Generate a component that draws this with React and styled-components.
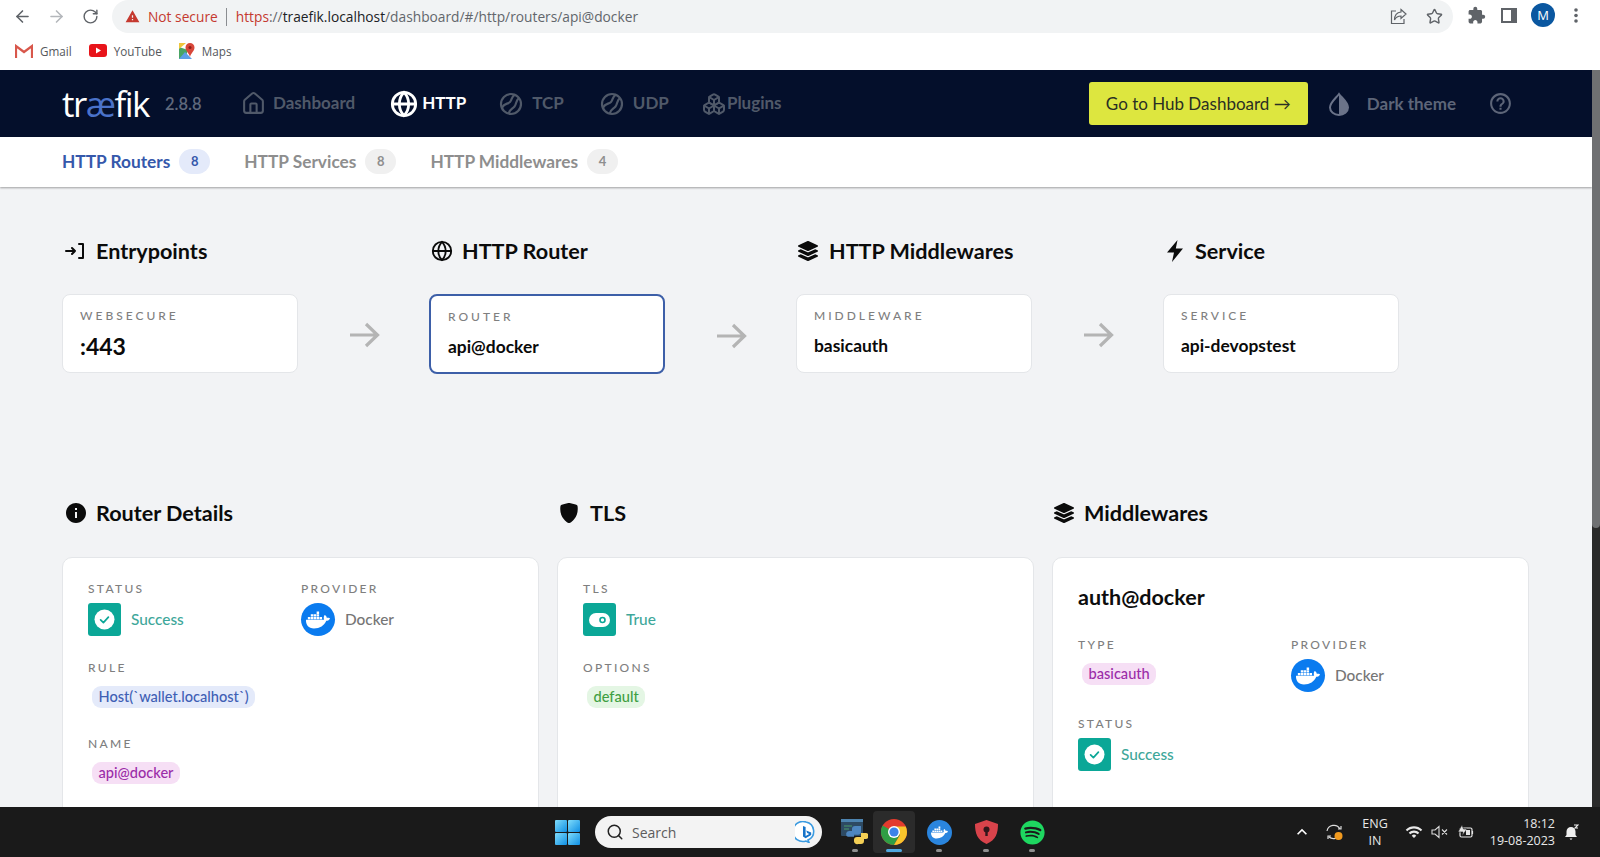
import React from 'react';
import styled, { createGlobalStyle } from 'styled-components';
import { ArrowLeft, ArrowRight, RotateCw, Star, Search, House, Globe, Boxes } from 'lucide-react';
import { FaDocker, FaSpotify, FaLayerGroup } from 'react-icons/fa';
import { MdInfo, MdHelpOutline, MdWarning, MdKeyboardArrowUp, MdWifi, MdExtension } from 'react-icons/md';
import { BsShieldFill } from 'react-icons/bs';

const Global = createGlobalStyle`
  html, body { margin: 0; padding: 0; height: 100%; overflow: hidden; background: #fff; }
  * { box-sizing: border-box; }
  body { font-family: Lato, "Noto Sans", sans-serif; }
`;

const Screen = styled.div`
  width: 1600px; height: 857px; display: flex; flex-direction: column; overflow: hidden;
`;

/* browser chrome */
const Toolbar = styled.div`
  height: 34px; flex: none; display: flex; align-items: flex-start; background: #fff; color: #5f6368;
`;
const ToolBtn = styled.span`
  width: 34px; height: 32px; flex: none; display: flex; align-items: center; justify-content: center;
  color: ${p => p.$muted ? '#b4b7bb' : '#5f6368'};
`;
const NavBtns = styled.div`
  width: 112px; flex: none; display: flex; padding-left: 5px;
`;
const Omnibox = styled.div`
  width: 1341px; height: 33px; flex: none; background: #f1f3f4; border-radius: 17px;
  display: flex; align-items: center; padding-left: 13px; font: 13.75px "Open Sans", sans-serif;
`;
const Insecure = styled.span`
  color: #c5392f; display: flex; align-items: center; gap: 8px;
  padding-right: 8px; border-right: 1px solid #8a8d91; line-height: 18px;
`;
const Url = styled.span`
  margin-left: 9px; color: #62666b; white-space: pre;
`;
const UrlScheme = styled.span` color: #c5392f; `;
const UrlHost = styled.span` color: #202124; `;
const OmniActions = styled.div`
  margin-left: auto; display: flex; align-items: center; gap: 19px; padding-right: 10px; color: #5f6368;
`;
const ToolRight = styled.div`
  flex: 1; display: flex; align-items: center; height: 30px; padding-left: 14px; color: #5f6368; gap: 15px;
`;
const Avatar = styled.span`
  width: 24px; height: 24px; border-radius: 50%; background: #0a57a0; color: #fff; font: 13px "Open Sans", sans-serif;
  display: flex; align-items: center; justify-content: center; flex: none; margin-left: -1px; margin-right: 4px;
`;
const Bookmarks = styled.div`
  height: 36px; flex: none; background: #fff; display: flex; align-items: center; padding: 0 0 3px 15px; gap: 17px;
  font: 11.7px "Open Sans", sans-serif; color: #55585c;
`;
const Bookmark = styled.span` display: flex; align-items: center; gap: 7px; `;

/* page */
const Viewport = styled.div` flex: 1; min-height: 0; display: flex; `;
const Page = styled.div`
  flex: 1; min-width: 0; background: #f2f3f5; overflow: hidden; display: flex; flex-direction: column;
`;
const ScrollTrack = styled.div`
  width: 8px; flex: none; background: #2a2a2a;
`;
const ScrollThumb = styled.div`
  height: 458px; background: #6f7072; border-radius: 0 0 4px 4px;
`;
const TopNav = styled.header`
  height: 67px; flex: none; background: #040f2b; display: flex; align-items: center; padding: 0 79px 0 62px;
`;
const Logo = styled.div`
  font: 400 35px "Open Sans", sans-serif; color: #fff; letter-spacing: -1.5px; width: 103px; line-height: 40px;
`;
const LogoAe = styled.span` color: #4a72c9; `;
const Version = styled.span`
  font-size: 16.5px; font-weight: 600; color: #5f687b; width: 76px;
`;
const NavItem = styled.a`
  display: flex; align-items: center; gap: ${p => p.$gap || 9}px; margin-right: ${p => p.$mr || 35}px; font-size: 17px; font-weight: 700;
  color: ${p => p.$active ? '#fff' : '#505969'};
`;
const NavText = styled.span` margin-top: -2px; `;
const NavRight = styled.div` margin-left: auto; display: flex; align-items: center; `;
const HubButton = styled.button`
  width: 219px; height: 43px; border: 0; border-radius: 3px; background: #dde63f; color: #2a2f24;
  font: 400 17px Lato, sans-serif; padding: 0;
`;
const ThemeToggle = styled.span`
  display: flex; align-items: center; gap: 16px; margin-left: 19px; color: #5d6578; font-size: 17px; font-weight: 700;
`;
const Help = styled.span` display: flex; margin-left: 32px; color: #5d6578; `;

const SubNav = styled.nav`
  height: 50px; flex: none; background: #fff; display: flex; align-items: center; padding: 0 0 2px 62px; gap: 34px;
  box-shadow: 0 1px 2px rgba(0,0,0,.35); position: relative;
`;
const Tab = styled.a`
  display: flex; align-items: center; gap: 9px; font-size: 17.3px; font-weight: 700;
  color: ${p => p.$active ? '#3558ab' : '#8e8e8e'};
`;
const TabCount = styled.span`
  width: 31px; height: 25px; border-radius: 13px; display: flex; align-items: center; justify-content: center;
  font-size: 13px; font-weight: 700;
  background: ${p => p.$active ? '#e4eafa' : '#f0f0f0'}; color: ${p => p.$active ? '#3558ab' : '#8e8e8e'};
`;
const Content = styled.main` padding: 50px 0 0 62px; flex: 1; min-height: 0; display: flex; flex-direction: column; `;
const FlowRow = styled.section` display: flex; `;
const FlowColumn = styled.div` width: 367px; flex: none; `;
const SectionTitle = styled.h2`
  margin: 0 0 ${p => p.$mb || 29}px; height: 28px; display: flex; align-items: center; gap: ${p => p.$gap || 9}px;
  font-size: 21.6px; font-weight: 700; line-height: 28px; color: #0b0b0b; white-space: nowrap;
  padding-left: 2px;
`;
const FlowBody = styled.div` display: flex; align-items: center; `;
const FlowCard = styled.div`
  width: 236px; height: ${p => p.$active ? 80 : 79}px; flex: none; background: #fff; border-radius: 8px; padding: 13px 17px 0;
  border: ${p => p.$active ? '2px solid #3d5fa8' : '1px solid #e4e6e9'};
`;
const FlowArrow = styled.span`
  width: 131px; display: flex; justify-content: center; padding: 3px 0 0 3px; color: #b4b4b4;
`;
const Label = styled.div`
  font-size: 12px; line-height: 16px; letter-spacing: 2.3px; color: #7f7f7f; font-weight: 500; text-transform: uppercase;
`;
const FlowLabel = styled(Label)` letter-spacing: 3px; `;
const FlowValue = styled.div`
  margin-top: 10px; line-height: 24px; color: #0a0a0a; font-weight: 700; font-size: ${p => p.$big ? 23 : 17.4}px;
`;
const DetailGrid = styled.section`
  margin-top: 125px; width: 1467px; display: grid; grid-template-columns: repeat(3, 1fr); column-gap: 18px;
`;
const DetailCard = styled.div`
  height: 400px; background: #fff; border: 1px solid #e4e6e9; border-radius: 10px; padding: 23px 24px 0 25px;
`;
const DetailColumn = styled.div` min-width: 0; `;
const FieldGrid = styled.div`
  display: grid; grid-template-columns: repeat(2, 213px); row-gap: 24px; align-content: start;
`;
const Field = styled.div` grid-column: ${p => p.$wide ? '1 / -1' : 'auto'}; `;
const IconLine = styled.div`
  margin-top: 6px; display: flex; align-items: center; gap: 10px; font-size: 15.4px; font-weight: 500;
  color: ${p => p.$tone || '#767676'};
`;
const IconLineText = styled.span` margin-top: -2px; `;
const StateBox = styled.span`
  width: 33px; height: 33px; border-radius: 3px; background: #0ba797; display: flex; align-items: center; justify-content: center; flex: none;
`;
const ProviderDisc = styled.span`
  width: 34px; height: 33px; border-radius: 50%; background: #0a7bef; display: flex; align-items: center; justify-content: center; color: #fff; flex: none;
`;
const Chip = styled.span`
  display: inline-block; margin: 10px 0 4px 4px; height: 22px; line-height: 22px; padding: 0 6.5px; border-radius: 9px;
  font-size: 14.6px; font-weight: 500; background: ${p => p.$bg}; color: ${p => p.$fg};
`;
const CardName = styled.div`
  height: 32px; line-height: 32px; margin-bottom: 24px; font-size: 21.5px; font-weight: 700; color: #0d0d0d;
`;

/* taskbar */
const Taskbar = styled.footer`
  height: 50px; flex: none; background: #1a1a1a; display: flex; align-items: center;
  color: #e8e8e8; font: 12.5px "Open Sans", sans-serif;
`;
const TaskCenter = styled.div`
  margin-left: 555px; display: flex; align-items: center;
`;
const SearchPill = styled.div`
  width: 227px; height: 32px; border-radius: 16px; background: #f3f3f3; margin-left: 15px; display: flex; align-items: center;
  padding-left: 11px; gap: 8px; color: #5c5c5c; font-size: 14px; position: relative;
`;
const BingBadge = styled.span` position: absolute; right: 5px; top: 5px; display: flex; `;
const TaskApps = styled.div` display: flex; align-items: center; margin-left: 14px; `;
const TaskSlot = styled.span`
  width: ${p => p.$w || 46}px; height: 42px; display: flex; align-items: center; justify-content: center; position: relative;
  border-radius: 4px; background: ${p => p.$on ? '#2b2b2b' : 'transparent'};
  &::after {
    content: ''; position: absolute; bottom: 1px; left: 50%; height: 3px; border-radius: 2px; transform: translateX(-50%);
    width: ${p => p.$on ? 16 : 6}px; background: ${p => p.$on ? '#4fa8e0' : '#8f8f8f'};
  }
`;
const AppDisc = styled.span`
  width: 25px; height: 25px; border-radius: 50%; background: #2a85de; color: #fff; display: flex; align-items: center; justify-content: center;
`;
const Tray = styled.div`
  margin-left: auto; display: flex; align-items: center; padding-right: 21px;
`;
const TrayStack = styled.div`
  display: flex; flex-direction: column; align-items: ${p => p.$end ? 'flex-end' : 'center'}; line-height: 17px; margin: ${p => p.$m || 0};
`;
const TrayIcon = styled.span` display: flex; margin: ${p => p.$m || 0}; `;

const Enter = () => (
  <svg width="22" height="22" viewBox="0 0 22 22" fill="none" stroke="#0b0b0b" strokeWidth="2" strokeLinecap="round" strokeLinejoin="round">
    <path d="M2 11h9M8 8l3 3-3 3M15 4h4v14h-4" />
  </svg>
);
const Swirl = () => (
  <svg width="24" height="24" viewBox="0 0 24 24" fill="none" stroke="#505969" strokeWidth="2.2" strokeLinecap="round">
    <circle cx="12" cy="12" r="10" />
    <path d="M15.500 3c-3 1.500-2.500 5-4.500 7s-6 1.500-7.500 5" />
    <path d="M19.500 6.500c-2.500 2-2 5.500-4 8s-5 3-5.500 6.500" />
  </svg>
);
const Droplet = () => (
  <svg width="24" height="24" viewBox="0 0 24 24">
    <path d="M12 2C9 6 3 10.500 3 15.500a9 7.500 0 0 0 18 0C21 10.500 15 6 12 2z" fill="none" stroke="#6b7389" strokeWidth="2" />
    <path d="M12 2c3 4 9 8.500 9 13.500S17 23 12 23z" fill="#6b7389" />
  </svg>
);
const Bolt = () => (
  <svg width="20" height="24" viewBox="0 0 20 24">
    <path d="M12.500 1L2 13.500h7L7 23l11-13.500h-7.200z" fill="#0b0b0b" />
  </svg>
);
const LongArrow = () => (
  <svg width="30" height="26" viewBox="0 0 30 26" fill="none" stroke="currentColor" strokeWidth="3.200">
    <path d="M0 13h27M16 2l11.500 11L16 24" />
  </svg>
);
const ShareBox = () => (
  <svg width="17" height="17" viewBox="0 0 17 17" fill="none" stroke="#5f6368" strokeWidth="1.200">
    <path d="M6 3H1.500v12.500H14V11" />
    <path d="M11 1.500L16 6l-5 4.500V8C8 8 6 9 4.500 12c0-4 2-7.500 6.500-8z" />
  </svg>
);
const Kebab = () => (
  <svg width="4" height="15" viewBox="0 0 4 15" fill="#5f6368">
    <circle cx="2" cy="2" r="1.800" />
    <circle cx="2" cy="7.500" r="1.800" />
    <circle cx="2" cy="13" r="1.800" />
  </svg>
);
const Check = () => (
  <svg width="21" height="21" viewBox="0 0 21 21">
    <circle cx="10.500" cy="10.500" r="10" fill="#fff" />
    <path d="M6.600 10.800l2.800 2.800 5-5.400" fill="none" stroke="#0ba797" strokeWidth="1.700" strokeLinecap="round" strokeLinejoin="round" />
  </svg>
);
const Toggle = () => (
  <svg width="21" height="14" viewBox="0 0 21 14">
    <rect width="21" height="14" rx="7" fill="#fff" />
    <circle cx="13.500" cy="7" r="2.500" fill="none" stroke="#0ba797" strokeWidth="1.600" />
  </svg>
);
const Gmail = () => (
  <svg width="18" height="14" viewBox="0 0 18 14">
    <path d="M1 14V2l8 6 8-6v12" fill="none" stroke="#d8574b" strokeWidth="2.200" />
  </svg>
);
const YouTube = () => (
  <svg width="18" height="13" viewBox="0 0 18 13">
    <rect width="18" height="13" rx="3" fill="#e8141a" />
    <path d="M7 3.500l5 3-5 3z" fill="#fff" />
  </svg>
);
const Maps = () => (
  <svg width="16" height="16" viewBox="0 0 16 16">
    <path d="M0 4l9 3-3 9H0z" fill="#4aa564" />
    <path d="M0 16l6-7 7 7z" fill="#5d9ee6" />
    <path d="M0 0h7L0 6z" fill="#f0c63c" />
    <path d="M11 0a4.500 4.500 0 0 1 4.500 4.500C15.500 8 12 10 11 14 10 10 6.500 8 6.500 4.500A4.500 4.500 0 0 1 11 0z" fill="#d8473a" />
    <circle cx="11" cy="4.500" r="1.500" fill="#8c1f18" />
  </svg>
);
const WinLogo = () => (
  <svg width="25" height="25" viewBox="0 0 25 25">
    <defs>
      <linearGradient id="w" x1="0" y1="0" x2="1" y2="1">
        <stop offset="0" stopColor="#7fdcfb" />
        <stop offset="1" stopColor="#0f8fe4" />
      </linearGradient>
    </defs>
    <rect width="12" height="12" rx="1" fill="url(#w)" />
    <rect x="13" width="12" height="12" rx="1" fill="url(#w)" />
    <rect y="13" width="12" height="12" rx="1" fill="url(#w)" />
    <rect x="13" y="13" width="12" height="12" rx="1" fill="url(#w)" />
  </svg>
);
const Bing = () => (
  <svg width="22" height="22" viewBox="0 0 22 22">
    <path d="M11 1a10 10 0 1 0 0 19l3 1.500-1-2.500a9.500 9.500 0 0 0-2-18z" fill="#fff" stroke="#3a9ae0" strokeWidth="1.600" />
    <path d="M8 5l2.600 1v9l3.600-2-2-1-1-2.600 5 2v2.600l-5.600 3.200-2.600-1.700z" fill="#1673c9" />
  </svg>
);
const Chrome = () => (
  <svg width="26" height="26" viewBox="0 0 26 26">
    <circle cx="13" cy="13" r="13" fill="#e33b2e" />
    <path d="M13 13L1.700 6.500A13 13 0 0 0 13 26l6.500-11.300z" fill="#2f9e44" />
    <path d="M13 7.500h11.700A13 13 0 0 1 26 13a13 13 0 0 1-13 13l6-10z" fill="#f8c52c" />
    <circle cx="13" cy="13" r="6" fill="#fff" />
    <circle cx="13" cy="13" r="4.600" fill="#3b83e8" />
  </svg>
);
const ShieldApp = () => (
  <svg width="25" height="26" viewBox="0 0 25 26">
    <path d="M12.500 1L24 5c0 9-2 16-11.500 20C3 21 1 14 1 5z" fill="#d8434b" />
    <circle cx="12.500" cy="10.500" r="3" fill="#30161a" />
    <rect x="11.300" y="12" width="2.400" height="5" fill="#30161a" />
  </svg>
);
const PyWindow = () => (
  <svg width="27" height="26" viewBox="0 0 27 26">
    <rect width="22" height="17" rx="1" fill="#2d4a63" />
    <rect width="22" height="3" fill="#4d84b0" />
    <path d="M3 7h8M3 10h5" stroke="#4d9c6a" strokeWidth="1.200" />
    <path d="M17 7h-3a3 3 0 0 0-3 3v2H8a3 3 0 0 0-1 5.800h6v-2h4a3 3 0 0 0 3-3V7z" fill="#4d86c0" />
    <path d="M17 25h3a3 3 0 0 0 3-3v-2h1a3 3 0 0 0 1-6h-5v4h-4a3 3 0 0 0-3 3v1a3 3 0 0 0 4 3z" fill="#f3cf55" />
  </svg>
);
const Sync = () => (
  <svg width="20" height="18" viewBox="0 0 20 18" fill="none" stroke="#dcdcdc" strokeWidth="1.200">
    <path d="M2 8a7 7 0 0 1 13-2M13 6h3V3M15 11a7 7 0 0 1-11 3M6 13H3v3" />
    <circle cx="13.500" cy="13" r="4" fill="#f19a1f" stroke="none" />
  </svg>
);
const Speaker = () => (
  <svg width="18" height="14" viewBox="0 0 18 14" fill="none" stroke="#dcdcdc" strokeWidth="1.100">
    <path d="M1 5h3l4-3.500v11L4 9H1zM11 4.500l5 5M16 4.500l-5 5" />
  </svg>
);
const Battery = () => (
  <svg width="18" height="16" viewBox="0 0 18 16" fill="none" stroke="#e5e5e5" strokeWidth="1.200">
    <rect x="3" y="4" width="12" height="9" rx="1.500" />
    <path d="M15.500 7v3" />
    <path d="M1 8l4-7 1.500 4H10l-5 7 1-4z" fill="#e5e5e5" stroke="#1a1a1a" strokeWidth=".6" />
    <path d="M9 6h4v5H9z" fill="#e5e5e5" stroke="none" />
  </svg>
);
const Bell = () => (
  <svg width="15" height="17" viewBox="0 0 15 17">
    <path d="M7 3a4.500 4.500 0 0 0-4.500 4.500V11L1 13h12l-1.500-2V7.500A4.500 4.500 0 0 0 7 3zM5.500 14.500h3L7 16z" fill="#efefef" />
    <path d="M10 1h4l-3 3h3" fill="none" stroke="#efefef" strokeWidth="1.100" />
  </svg>
);

const FlowStep = ({ icon, title, label, value, big, active, arrow, gap }) => (
  <FlowColumn>
    <SectionTitle $gap={gap}>{icon}{title}</SectionTitle>
    <FlowBody>
      <FlowCard $active={active}>
        <FlowLabel>{label}</FlowLabel>
        <FlowValue $big={big}>{value}</FlowValue>
      </FlowCard>
      {arrow && <FlowArrow><LongArrow /></FlowArrow>}
    </FlowBody>
  </FlowColumn>
);

const StatusField = ({ label, text, icon }) => (
  <Field>
    <Label>{label}</Label>
    <IconLine $tone="#3ea79a"><StateBox>{icon}</StateBox><IconLineText>{text}</IconLineText></IconLine>
  </Field>
);
const ProviderField = () => (
  <Field>
    <Label>Provider</Label>
    <IconLine><ProviderDisc><FaDocker size={24} /></ProviderDisc><IconLineText>Docker</IconLineText></IconLine>
  </Field>
);
const ChipField = ({ label, text, bg, fg, wide }) => (
  <Field $wide={wide}>
    <Label>{label}</Label>
    <Chip $bg={bg} $fg={fg}>{text}</Chip>
  </Field>
);

export default function App() {
  return (
    <Screen>
      <Global />
      <Toolbar>
        <NavBtns>
          <ToolBtn><ArrowLeft size={19} /></ToolBtn>
          <ToolBtn $muted><ArrowRight size={19} /></ToolBtn>
          <ToolBtn><RotateCw size={17} /></ToolBtn>
        </NavBtns>
        <Omnibox>
          <Insecure><MdWarning size={15} color="#c5392f" />Not secure</Insecure>
          <Url><UrlScheme>https</UrlScheme>://<UrlHost>traefik.localhost</UrlHost>/dashboard/#/http/routers/api@docker</Url>
          <OmniActions>
            <ShareBox />
            <Star size={17} strokeWidth={2} />
          </OmniActions>
        </Omnibox>
        <ToolRight>
          <MdExtension size={19} />
          <svg width="16" height="15" viewBox="0 0 16 15"><path d="M0 0h16v15H0z" fill="#5f6368" /><path d="M2 2h8v11H2z" fill="#fff" /></svg>
          <Avatar>M</Avatar>
          <Kebab />
        </ToolRight>
      </Toolbar>
      <Bookmarks>
        <Bookmark><Gmail />Gmail</Bookmark>
        <Bookmark><YouTube />YouTube</Bookmark>
        <Bookmark><Maps />Maps</Bookmark>
      </Bookmarks>
      <Viewport>
        <Page>
          <TopNav>
            <Logo>tr<LogoAe>æ</LogoAe>fik</Logo>
            <Version>2.8.8</Version>
            <NavItem $gap={7}><House size={25} strokeWidth={2} /><NavText>Dashboard</NavText></NavItem>
            <NavItem $active $gap={4} $mr={33}><Globe size={28} strokeWidth={2.4} /><NavText>HTTP</NavText></NavItem>
            <NavItem $mr={36}><Swirl /><NavText>TCP</NavText></NavItem>
            <NavItem $mr={33}><Swirl /><NavText>UDP</NavText></NavItem>
            <NavItem $gap={1}><Boxes size={24} /><NavText>Plugins</NavText></NavItem>
            <NavRight>
              <HubButton>Go to Hub Dashboard →</HubButton>
              <ThemeToggle><Droplet />Dark theme</ThemeToggle>
              <Help><MdHelpOutline size={25} /></Help>
            </NavRight>
          </TopNav>
          <SubNav>
            <Tab $active>HTTP Routers<TabCount $active>8</TabCount></Tab>
            <Tab>HTTP Services<TabCount>8</TabCount></Tab>
            <Tab>HTTP Middlewares<TabCount>4</TabCount></Tab>
          </SubNav>
          <Content>
            <FlowRow>
              <FlowStep icon={<Enter />} title="Entrypoints" label="websecure" value=":443" big arrow gap={10} />
              <FlowStep icon={<Globe size={22} strokeWidth={2} color="#0b0b0b" />} title="HTTP Router" label="Router" value="api@docker" active arrow />
              <FlowStep icon={<FaLayerGroup size={20} />} title="HTTP Middlewares" label="Middleware" value="basicauth" arrow gap={11} />
              <FlowStep icon={<Bolt />} title="Service" label="Service" value="api-devopstest" gap={10} />
            </FlowRow>
            <DetailGrid>
              <DetailColumn>
                <SectionTitle $mb={30} $gap={8}><MdInfo size={24} />Router Details</SectionTitle>
                <DetailCard>
                  <FieldGrid>
                    <StatusField label="Status" text="Success" icon={<Check />} />
                    <ProviderField />
                    <ChipField wide label="Rule" text="Host(`wallet.localhost`)" bg="#e4eafa" fg="#3f5fb5" />
                    <ChipField wide label="Name" text="api@docker" bg="#f6dff5" fg="#9b2da8" />
                  </FieldGrid>
                </DetailCard>
              </DetailColumn>
              <DetailColumn>
                <SectionTitle $mb={30} $gap={11}><BsShieldFill size={20} />TLS</SectionTitle>
                <DetailCard>
                  <FieldGrid>
                    <StatusField label="TLS" text="True" icon={<Toggle />} />
                    <Field />
                    <ChipField wide label="Options" text="default" bg="#e4f6e4" fg="#3f9f43" />
                  </FieldGrid>
                </DetailCard>
              </DetailColumn>
              <DetailColumn>
                <SectionTitle $mb={30} $gap={10}><FaLayerGroup size={20} />Middlewares</SectionTitle>
                <DetailCard>
                  <CardName>auth@docker</CardName>
                  <FieldGrid>
                    <ChipField label="Type" text="basicauth" bg="#f6dff5" fg="#9b2da8" />
                    <ProviderField />
                    <StatusField label="Status" text="Success" icon={<Check />} />
                  </FieldGrid>
                </DetailCard>
              </DetailColumn>
            </DetailGrid>
          </Content>
        </Page>
        <ScrollTrack><ScrollThumb /></ScrollTrack>
      </Viewport>
      <Taskbar>
        <TaskCenter>
          <WinLogo />
          <SearchPill>
            <Search size={18} color="#222" />
            Search
            <BingBadge><Bing /></BingBadge>
          </SearchPill>
          <TaskApps>
            <TaskSlot $w={37}><PyWindow /></TaskSlot>
            <TaskSlot $on $w={42}><Chrome /></TaskSlot>
            <TaskSlot $w={48}><AppDisc><FaDocker size={17} /></AppDisc></TaskSlot>
            <TaskSlot $w={46}><ShieldApp /></TaskSlot>
            <TaskSlot $w={46}><FaSpotify size={25} color="#1ed760" /></TaskSlot>
          </TaskApps>
        </TaskCenter>
        <Tray>
          <TrayIcon $m="0 13px 0 0"><MdKeyboardArrowUp size={20} color="#fff" /></TrayIcon>
          <TrayIcon $m="0 17px 0 0"><Sync /></TrayIcon>
          <TrayStack $m="0 17px 0 0"><span>ENG</span><span>IN</span></TrayStack>
          <TrayIcon $m="0 8px 0 0"><MdWifi size={18} /></TrayIcon>
          <TrayIcon $m="0 8px 0 0"><Speaker /></TrayIcon>
          <TrayIcon $m="0 15px 0 0"><Battery /></TrayIcon>
          <TrayStack $end $m="0 9px 0 0"><span>18:12</span><span>19-08-2023</span></TrayStack>
          <TrayIcon><Bell /></TrayIcon>
        </Tray>
      </Taskbar>
    </Screen>
  );
}
